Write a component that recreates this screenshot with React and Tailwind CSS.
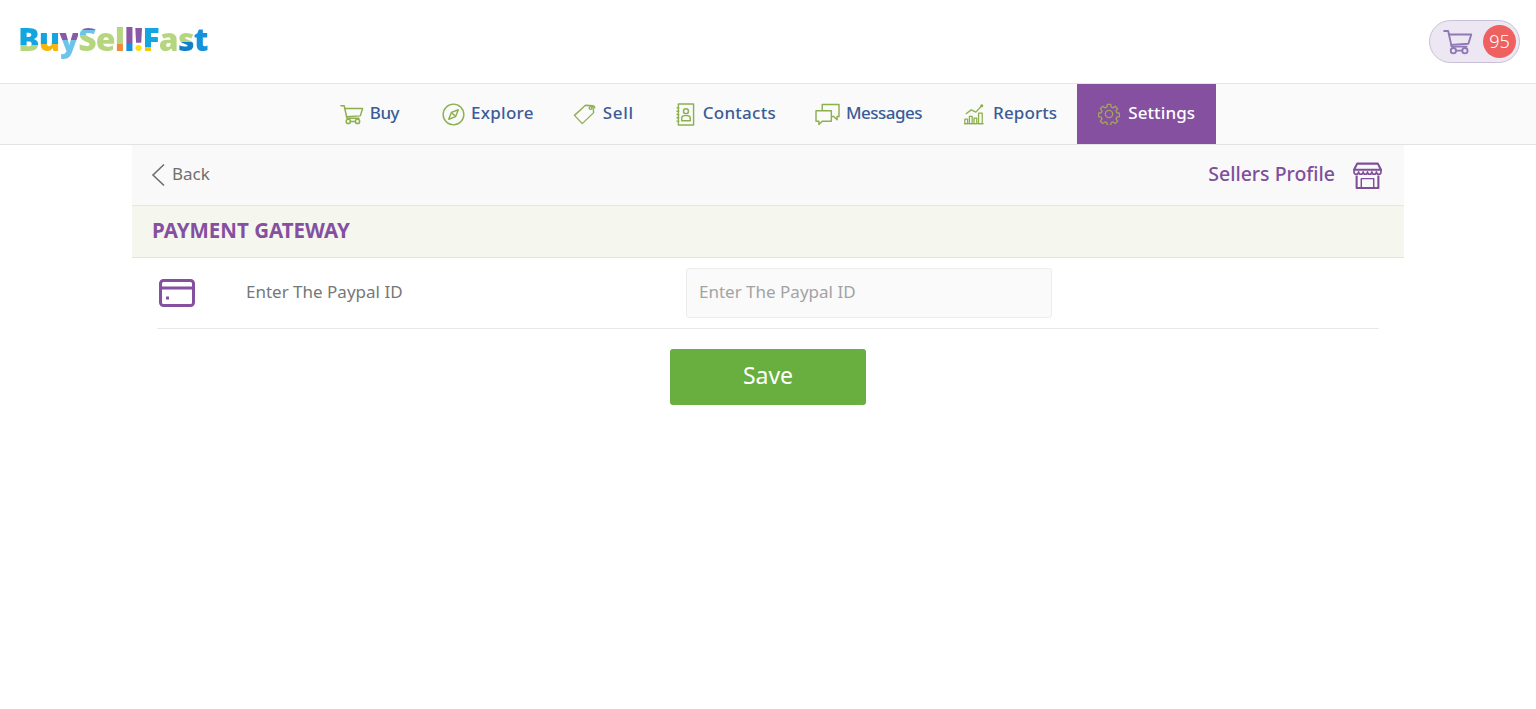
function CartIcon({ className }) {
  return (
    <svg viewBox="0 0 26 22" fill="none" stroke="currentColor" strokeWidth="1.6" strokeLinecap="round" strokeLinejoin="round" className={className}>
      <path d="M1 1.5h3.5l3 13.5h13" />
      <path d="M5 4.5h19.5l-2.5 8-15 1" />
      <circle cx="9" cy="18.5" r="2.3" />
      <circle cx="19" cy="18.5" r="2.3" />
      <path d="M11.3 18.5h5.4" />
    </svg>
  )
}

function CompassIcon({ className }) {
  return (
    <svg viewBox="0 0 24 24" fill="none" stroke="currentColor" strokeWidth="1.5" strokeLinejoin="round" className={className}>
      <circle cx="12" cy="12" r="10.8" />
      <path d="M17 7l-2.8 7.2L7 17l2.8-7.2z" />
      <path d="M9.8 9.8l4.4 4.4" />
    </svg>
  )
}

function TagIcon({ className }) {
  return (
    <svg viewBox="0 0 26 24" fill="none" stroke="currentColor" strokeWidth="1.5" strokeLinejoin="round" className={className}>
      <path d="M1.5 13.5L13.5 2.5l8 .5 1 7.5L10 22.5z" />
      <circle cx="19" cy="5.5" r="1.5" />
      <path d="M20 3.5c2-1 4 0 3.5 2.5" />
    </svg>
  )
}

function ContactsIcon({ className }) {
  return (
    <svg viewBox="0 0 20 24" fill="none" stroke="currentColor" strokeWidth="1.5" strokeLinejoin="round" className={className}>
      <rect x="2.5" y="1" width="16" height="22" />
      <path d="M.5 5h3M.5 8.5h3M.5 12h3M.5 15.5h3M.5 19h3" />
      <circle cx="10.5" cy="8.5" r="2.6" />
      <path d="M6 18.5v-2.5c0-1.6 1.4-2.8 3-2.8h3c1.6 0 3 1.2 3 2.8v2.5z" />
    </svg>
  )
}

function MessagesIcon({ className }) {
  return (
    <svg viewBox="0 0 26 24" fill="none" stroke="currentColor" strokeWidth="1.5" strokeLinejoin="round" className={className}>
      <path d="M7.5 8V1.5h17.5v12.5h-2v3.5L19.5 14h-2" />
      <path d="M1 8h16v11H7.5L4 22.5V19H1z" />
    </svg>
  )
}

function ReportsIcon({ className }) {
  return (
    <svg viewBox="0 0 24 24" fill="none" stroke="currentColor" strokeWidth="1.4" strokeLinejoin="round" className={className}>
      <path d="M3 12l6-4.5 5 2.5 6.5-7" />
      <circle cx="20.5" cy="3" r="1" fill="currentColor" />
      <path d="M1 22.5h21.5" />
      <path d="M2 22.5v-5h3v5zM7 22.5v-8h3v8zM12 22.5v-6h3v6zM17 22.5V11h4v11.5z" />
    </svg>
  )
}

function GearIcon({ className }) {
  return (
    <svg viewBox="0 0 24 24" fill="none" stroke="currentColor" strokeWidth="1.5" strokeLinejoin="round" className={className}>
      <circle cx="12" cy="12" r="4" />
      <path d="M10.2 1.5h3.6l.6 3 1.9.8 2.5-1.7 2.6 2.6-1.7 2.5.8 1.9 3 .6v3.6l-3 .6-.8 1.9 1.7 2.5-2.6 2.6-2.5-1.7-1.9.8-.6 3h-3.6l-.6-3-1.9-.8-2.5 1.7-2.6-2.6 1.7-2.5-.8-1.9-3-.6v-3.6l3-.6.8-1.9-1.7-2.5 2.6-2.6 2.5 1.7 1.9-.8z" />
    </svg>
  )
}

function StoreIcon({ className }) {
  return (
    <svg viewBox="0 0 28 26" fill="none" stroke="currentColor" strokeWidth="2" strokeLinejoin="round" className={className}>
      <path d="M4 1.5h20l3 6H1z" />
      <path d="M1 7.5v2c0 3 4.3 3 4.4 0 .1 3 4.3 3 4.4 0 .1 3 4.1 3 4.2 0 .1 3 4.1 3 4.2 0 .1 3 4.3 3 4.4 0 .1 3 4.4 3 4.4 0v-2" strokeWidth="1.6" />
      <path d="M3.5 13v12h21V13" />
      <path d="M8 25v-9h12v9" strokeWidth="1.4" />
    </svg>
  )
}

function CardIcon({ className }) {
  return (
    <svg viewBox="0 0 36 28" fill="none" stroke="currentColor" strokeWidth="3" strokeLinejoin="round" className={className}>
      <rect x="1.5" y="1.5" width="33" height="25" rx="3" />
      <path d="M1.5 9h33" />
      <path d="M7 19h3" />
    </svg>
  )
}

const navItems = [
  { label: 'Buy', icon: CartIcon, size: 'w-[24px] h-[21px]', box: 'w-[30px]', track: 'tracking-[-0.5px]', pad: 'pl-5 pr-5' },
  { label: 'Explore', icon: CompassIcon, size: 'w-[23px] h-[23px]', box: 'w-[29px]', track: 'tracking-[0.25px]', pad: 'pl-[23px] pr-5' },
  { label: 'Sell', icon: TagIcon, size: 'w-[24px] h-[22px]', box: 'w-[30px]', track: 'tracking-[0.7px]', pad: 'pl-[19px] pr-5' },
  { label: 'Contacts', icon: ContactsIcon, size: 'w-[19px] h-[23px]', box: 'w-[27px]', track: 'tracking-[0.25px]', pad: 'pl-[22px] pr-5' },
  { label: 'Messages', icon: MessagesIcon, size: 'w-[25px] h-[23px]', box: 'w-[31px]', track: 'tracking-[-0.5px]', pad: 'pl-[19px] pr-5' },
  { label: 'Reports', icon: ReportsIcon, size: 'w-[22px] h-[22px]', box: 'w-[30px]', track: 'tracking-[0.1px]', pad: 'pl-[21px] pr-5' },
  { label: 'Settings', icon: GearIcon, size: 'w-[22px] h-[22px]', box: 'w-[30px]', track: 'tracking-[0.1px]', pad: 'pl-[21px] pr-[21px]', active: true },
]

const logoLetters = [
  ['B', 'bg-[linear-gradient(#12a5e0_66%,#b5d67e_66%)]'],
  ['u', 'bg-[linear-gradient(#12a5e0_62%,#f5b60f_62%)]'],
  ['y', 'bg-[linear-gradient(#8a58a5_52%,#6dc4ea_52%)]'],
  ['S', 'bg-[linear-gradient(#8a58a5_28%,#6dc4ea_28%,#6dc4ea_40%,#b5d67e_40%)]'],
  ['e', 'bg-[linear-gradient(#b5d67e_100%,#b5d67e_100%)]'],
  ['l', 'bg-[linear-gradient(#b5d67e_62%,#ee8a3a_62%)]'],
  ['l', 'bg-[linear-gradient(#8a58a5_62%,#1493dc_62%)]'],
  ['!', 'bg-[linear-gradient(#8a58a5_62%,#f7e017_62%)]'],
  ['F', 'bg-[linear-gradient(#12a5e0_70%,#f5c60f_70%)]'],
  ['a', 'bg-[linear-gradient(#b5d67e_100%,#b5d67e_100%)]'],
  ['s', 'bg-[linear-gradient(#b5d67e_58%,#0f7fc9_58%)]'],
  ['t', 'bg-[linear-gradient(#1493dc_100%,#1493dc_100%)]'],
]

function Logo() {
  return (
    <div className="flex text-[32px] leading-[40px] font-black tracking-[-0.8px] pb-[5px]">
      {logoLetters.map(([ch, cls], i) => (
        <span key={i} className={`${cls} bg-clip-text text-transparent`}>{ch}</span>
      ))}
    </div>
  )
}

export default function App() {
  return (
    <div className="min-h-[709px] bg-white font-['Noto_Sans',sans-serif]">
      <header className="h-[84px] flex items-center justify-between border-b border-[#e6e6e6] pl-[18px] pr-[16px]">
        <Logo />
        <div className="w-[91px] h-[43px] rounded-full bg-[#ece7f2] border border-[#c9c0d8] flex items-center justify-between pl-[13px] pr-[3px]">
          <CartIcon className="w-[30px] h-[26px] text-[#8f78b3]" />
          <span className="w-[33px] h-[33px] rounded-full bg-[#ef6060] text-white text-[18px] font-light flex items-center justify-center">95</span>
        </div>
      </header>

      <nav className="h-[61px] bg-[#fafafa] border-b border-[#e3e3e3] flex justify-center">
        {navItems.map(({ label, icon: Icon, size, box, track, pad, active }) => (
          <a
            key={label}
            href="#"
            className={`h-[60px] ${pad} flex items-center text-[17px] font-medium ${track} ${active ? 'bg-[#84509f] text-white' : 'text-[#3b5c98]'}`}
          >
            <span className={`${box} shrink-0`}>
              <Icon className={`${size} ${active ? 'text-[#a3a35f]' : 'text-[#8db04e]'}`} />
            </span>
            <span className="pb-[2px]">{label}</span>
          </a>
        ))}
      </nav>

      <main className="w-[1272px] mx-auto">
        <div className="h-[61px] bg-[#f9f9f9] border-b border-[#e6e6e0] flex items-center justify-between pl-[19px] pr-[22px]">
          <a href="#" className="flex items-center gap-[7px] text-[17px] text-[#6f6f6f]">
            <svg viewBox="0 0 14 24" fill="none" stroke="currentColor" strokeWidth="1.6" className="w-[14px] h-[24px]">
              <path d="M13 1.5L2 12l11 10.5" />
            </svg>
            <span className="pb-[2px]">Back</span>
          </a>
          <a href="#" className="flex items-center gap-[18px] text-[19.5px] font-medium text-[#7f4f9c]">
            <span className="pb-[2px]">Sellers Profile</span>
            <StoreIcon className="w-[29px] h-[27px]" />
          </a>
        </div>

        <div className="h-[52px] bg-[#f5f6ee] border-b border-[#e3e3e3] flex items-center pl-5">
          <h1 className="text-[20.5px] font-bold text-[#84509f] pb-[2px]">PAYMENT GATEWAY</h1>
        </div>

        <div className="mx-[25px] h-[71px] border-b border-[#e8e8e8] flex items-center">
          <CardIcon className="ml-[2px] w-[36px] h-[28px] text-[#84509f]" />
          <label className="ml-[51px] w-[440px] text-[17px] text-[#777] pb-[2px]">Enter The Paypal ID</label>
          <input
            placeholder="Enter The Paypal ID"
            className="w-[366px] h-[50px] px-3 pb-[3px] bg-[#fafafa] border border-[#ececec] rounded-[3px] text-[17px] placeholder:text-[#a3a3a3] outline-none"
          />
        </div>

        <div className="flex justify-center pt-5">
          <button className="w-[196px] h-[56px] pb-[3px] bg-[#68af3f] rounded-[3px] text-white text-[23px]">Save</button>
        </div>
      </main>
    </div>
  )
}
